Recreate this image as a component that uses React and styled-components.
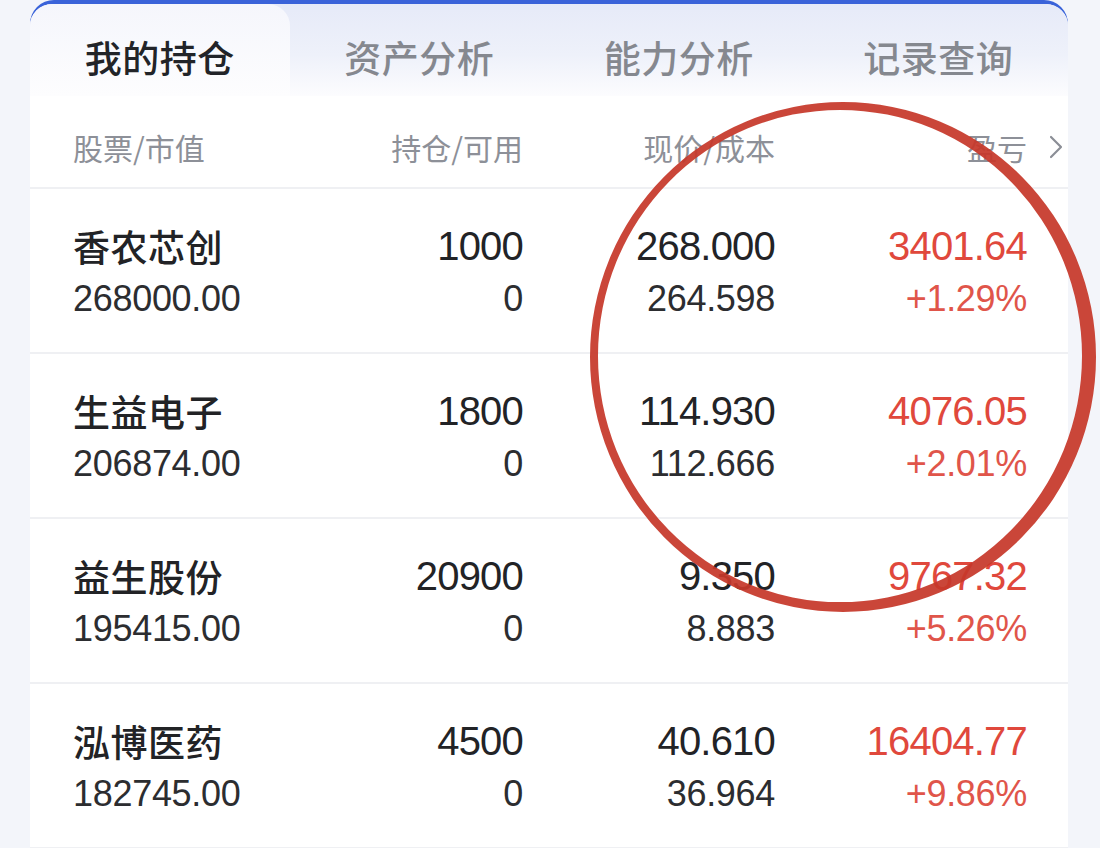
import React from "react";
import styled, { createGlobalStyle } from "styled-components";

const GlobalStyle = createGlobalStyle`
  html, body {
    margin: 0;
    padding: 0;
    background: #f3f5fa;
  }
  body {
    font-family: "Liberation Sans", "Noto Sans CJK SC", sans-serif;
  }
`;

const Page = styled.div`
  position: relative;
  width: 1100px;
  height: 848px;
  overflow: hidden;
  padding: 0 32px 0 30px;
  box-sizing: border-box;
  background: #f3f5fa;
`;

// blue header strip peeking out behind the card corners
const Backdrop = styled.div`
  padding-top: 4px;
  border-radius: 24px 24px 0 0;
  background: linear-gradient(180deg, #3a63d9 0, #3a63d9 40px, transparent 40px);
`;

const Card = styled.div`
  background: #fff;
  border-radius: 22px 22px 0 0;
  overflow: hidden;
  min-height: 900px;
`;

const TabBar = styled.div`
  display: flex;
  height: 92px;
  background: linear-gradient(180deg, #e6eaf8 0%, #eef1fa 55%, #fcfcfe 100%);
`;

const Tab = styled.div`
  flex: 1;
  display: flex;
  align-items: center;
  justify-content: center;
  padding-top: 14px;
  font-family: "Noto Sans CJK SC", sans-serif;
  font-size: 37px;
  font-weight: 500;
  letter-spacing: 0.5px;
  color: ${(p) => (p.$active ? "#222428" : "#85888f")};
  border-radius: ${(p) => (p.$active ? "22px 22px 0 0" : "0")};
  background: ${(p) =>
    p.$active ? "linear-gradient(180deg, #f5f6fc 0%, #fdfdfe 100%)" : "transparent"};
`;

const Grid = styled.div`
  display: grid;
  grid-template-columns: 200px 250px 252px 252px 41px;
  padding-left: 43px;
  align-items: center;
`;

const HeadRow = styled(Grid)`
  height: 93px;
  padding-top: 10px;
  box-sizing: border-box;
  border-bottom: 2px solid #eff0f3;
  font-family: "Noto Sans CJK SC", sans-serif;
  font-size: 30px;
  color: #8d9098;
`;

const HeadCell = styled.div`
  text-align: ${(p) => (p.$left ? "left" : "right")};
  white-space: nowrap;
`;

const Chevron = styled.div`
  display: flex;
  justify-content: flex-end;
  padding-right: 5px;
  color: #8b8e96;
`;

const Row = styled(Grid)`
  height: 165px;
  box-sizing: border-box;
  border-bottom: 2px solid #eff0f3;
`;

const Cell = styled.div`
  display: flex;
  flex-direction: column;
  align-items: ${(p) => (p.$left ? "flex-start" : "flex-end")};
  gap: 9px;
  white-space: nowrap;
`;

const Main = styled.div`
  height: 48px;
  line-height: 48px;
  font-size: ${(p) => (p.$name ? "37px" : "40px")};
  font-family: ${(p) =>
    p.$name ? '"Noto Sans CJK SC", sans-serif' : '"Liberation Sans", sans-serif'};
  font-weight: ${(p) => (p.$name ? 500 : 400)};
  letter-spacing: ${(p) => (p.$name ? "0.5px" : "-0.8px")};
  color: ${(p) => (p.$red ? "#e0483c" : "#222326")};
`;

const Sub = styled.div`
  height: 40px;
  line-height: 40px;
  font-size: 36px;
  letter-spacing: -0.3px;
  color: ${(p) => (p.$red ? "#e0554a" : "#2c2d30")};
`;

const Mark = styled.svg`
  position: absolute;
  left: 0;
  top: 0;
  pointer-events: none;
`;

const tabs = ["我的持仓", "资产分析", "能力分析", "记录查询"];

const holdings = [
  { name: "香农芯创", value: "268000.00", qty: "1000", avail: "0", price: "268.000", cost: "264.598", pnl: "3401.64", pct: "+1.29%" },
  { name: "生益电子", value: "206874.00", qty: "1800", avail: "0", price: "114.930", cost: "112.666", pnl: "4076.05", pct: "+2.01%" },
  { name: "益生股份", value: "195415.00", qty: "20900", avail: "0", price: "9.350", cost: "8.883", pnl: "9767.32", pct: "+5.26%" },
  { name: "泓博医药", value: "182745.00", qty: "4500", avail: "0", price: "40.610", cost: "36.964", pnl: "16404.77", pct: "+9.86%" },
];

// hand-drawn ring: two offset ellipses filled even-odd so the stroke width wobbles
const ellipse = (cx, cy, rx, ry) =>
  `M ${cx - rx} ${cy} a ${rx} ${ry} 0 1 0 ${rx * 2} 0 a ${rx} ${ry} 0 1 0 ${-rx * 2} 0 Z`;

const App = () => (
  <Page>
    <GlobalStyle />
    <Backdrop>
      <Card>
        <TabBar>
          {tabs.map((t, i) => (
            <Tab key={t} $active={i === 0}>
              {t}
            </Tab>
          ))}
        </TabBar>
        <HeadRow>
          <HeadCell $left>股票/市值</HeadCell>
          <HeadCell>持仓/可用</HeadCell>
          <HeadCell>现价/成本</HeadCell>
          <HeadCell>盈亏</HeadCell>
          <Chevron>
            <svg width="14" height="24" viewBox="0 0 14 24" fill="none">
              <path d="M2 2 L12 12 L2 22" stroke="currentColor" strokeWidth="2.2" strokeLinecap="round" strokeLinejoin="round" />
            </svg>
          </Chevron>
        </HeadRow>
        {holdings.map((h) => (
          <Row key={h.name}>
            <Cell $left>
              <Main $name>{h.name}</Main>
              <Sub>{h.value}</Sub>
            </Cell>
            <Cell>
              <Main>{h.qty}</Main>
              <Sub>{h.avail}</Sub>
            </Cell>
            <Cell>
              <Main>{h.price}</Main>
              <Sub>{h.cost}</Sub>
            </Cell>
            <Cell>
              <Main $red>{h.pnl}</Main>
              <Sub $red>{h.pct}</Sub>
            </Cell>
            <div />
          </Row>
        ))}
      </Card>
    </Backdrop>
    <Mark width="1100" height="848" viewBox="0 0 1100 848">
      <path
        d={`${ellipse(843, 357, 253, 255)} ${ellipse(840, 356, 242, 246)}`}
        fill="rgba(198, 56, 42, 0.93)"
        fillRule="evenodd"
      />
    </Mark>
  </Page>
);

export default App;
